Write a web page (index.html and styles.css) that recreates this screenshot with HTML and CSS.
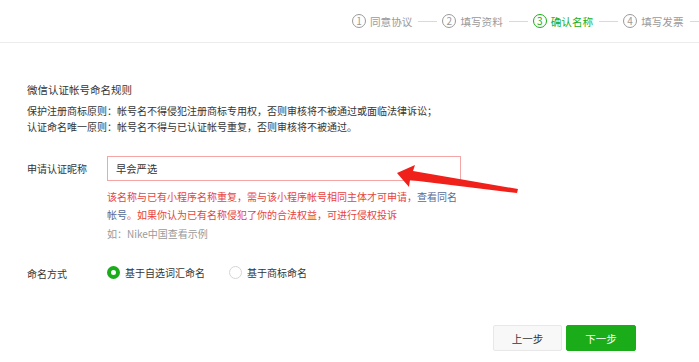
FILE: index.html
```html
<!DOCTYPE html>
<html lang="zh-CN">
<head>
  <meta charset="UTF-8">
  <title>确认名称</title>
  <link rel="stylesheet" href="styles.css">
</head>
<body>
  <div class="steps-bar">
    <div class="step"><span class="step-num">1</span>同意协议</div>
    <span class="step-line"></span>
    <div class="step"><span class="step-num">2</span>填写资料</div>
    <span class="step-line"></span>
    <div class="step active"><span class="step-num">3</span>确认名称</div>
    <span class="step-line"></span>
    <div class="step"><span class="step-num">4</span>填写发票</div>
    <span class="step-line"></span>
  </div>

  <div class="content">
    <h3 class="rules-title">微信认证帐号命名规则</h3>
    <p class="rule">保护注册商标原则：帐号名不得侵犯注册商标专用权，否则审核将不被通过或面临法律诉讼；</p>
    <p class="rule">认证命名唯一原则：帐号名不得与已认证帐号重复，否则审核将不被通过。</p>

    <div class="form-row">
      <label class="form-label name-label" for="nickname">申请认证昵称</label>
      <div class="form-field">
        <input type="text" id="nickname" class="name-input" value="早会严选">
        <p class="error-tip">该名称与已有小程序名称重复，需与该小程序帐号相同主体才可申请，<a href="#" class="link">查看同名</a><br><a href="#" class="link">帐号</a>。如果你认为已有名称侵犯了你的合法权益，可进行侵权投诉</p>
        <p class="hint">如：Nike中国查看示例</p>
      </div>
    </div>

    <div class="form-row mode-row">
      <span class="form-label mode-label">命名方式</span>
      <div class="radios">
        <label class="radio"><span class="radio-dot checked"></span>基于自选词汇命名</label>
        <label class="radio"><span class="radio-dot"></span>基于商标命名</label>
      </div>
    </div>

    <div class="actions">
      <button class="btn btn-default">上一步</button>
      <button class="btn btn-primary">下一步</button>
    </div>
  </div>

  <svg class="arrow" width="699" height="362" viewBox="0 0 699 362">
    <polygon points="397,173 415,165 413,171 518,189 517,193 410,180 409,187" fill="#f0201b"/>
  </svg>
</body>
</html>
```

FILE: styles.css
```css
body {
  margin: 0;
  width: 699px;
  height: 362px;
  overflow: hidden;
  position: relative;
  font-family: "Noto Sans CJK SC", "Liberation Sans", sans-serif;
  font-size: 10px;
  color: #353535;
  background: #fff;
}

.steps-bar {
  height: 42px;
  border-bottom: 1px solid #ececec;
  display: flex;
  align-items: center;
  padding-left: 352px;
  white-space: nowrap;
  color: #9a9a9a;
}

.step {
  display: flex;
  align-items: center;
  font-size: 10.6px;
}

.step-num {
  width: 12px;
  height: 12px;
  border: 1px solid #9a9a9a;
  border-radius: 50%;
  font-size: 10px;
  line-height: 12px;
  text-align: center;
  margin-right: 4px;
}

.step.active {
  color: #1aad19;
}

.step.active .step-num {
  border-color: #1aad19;
}

.step-line {
  flex: none;
  width: 19px;
  height: 1px;
  background: #d9d9d9;
  margin: 0 5px 0 6px;
}

.content {
  padding-left: 27px;
}

.rules-title {
  margin: 39px 0 5px;
  font-size: 10.5px;
  font-weight: normal;
  line-height: 16px;
}

.rule {
  margin: 0;
  font-size: 10px;
  line-height: 16px;
}

.form-row {
  display: flex;
  margin-top: 21px;
}

.form-label {
  width: 80px;
  flex: none;
}

.name-label {
  line-height: 25px;
}

.form-field {
  width: 354px;
}

.name-input {
  display: block;
  width: 354px;
  height: 25px;
  box-sizing: border-box;
  border: 1px solid #f4a5a5;
  padding: 0 8px;
  font-family: inherit;
  font-size: 10.3px;
  color: #353535;
  outline: none;
}

.error-tip {
  margin: 7px 0 0;
  line-height: 18px;
  color: #e64340;
}

.link {
  color: #576b95;
  text-decoration: none;
}

.hint {
  margin: 1px 0 0;
  line-height: 18px;
  color: #9a9a9a;
}

.mode-row {
  margin-top: 20px;
}

.mode-label {
  padding-top: 3px;
  line-height: 16px;
}

.radios {
  display: flex;
  gap: 24px;
}

.radio {
  display: flex;
  align-items: center;
  line-height: 13px;
}

.radio-dot {
  width: 13px;
  height: 13px;
  box-sizing: border-box;
  border: 1px solid #d6d6d6;
  border-radius: 50%;
  margin-right: 5px;
}

.radio-dot.checked {
  border: 4px solid #1aad19;
}

.actions {
  display: flex;
  justify-content: flex-end;
  gap: 4px;
  margin-top: 43px;
  padding-right: 63px;
}

.btn {
  height: 26px;
  border-radius: 2px;
  font-family: inherit;
  font-size: 10.5px;
  padding: 0;
  cursor: pointer;
}

.btn-default {
  width: 69px;
  background: #f8f8f8;
  border: 1px solid #e8e8e8;
  color: #353535;
}

.btn-primary {
  width: 70px;
  background: #1aad19;
  border: 1px solid #1aad19;
  color: #fff;
}

.arrow {
  position: absolute;
  left: 0;
  top: 0;
  pointer-events: none;
}
```
